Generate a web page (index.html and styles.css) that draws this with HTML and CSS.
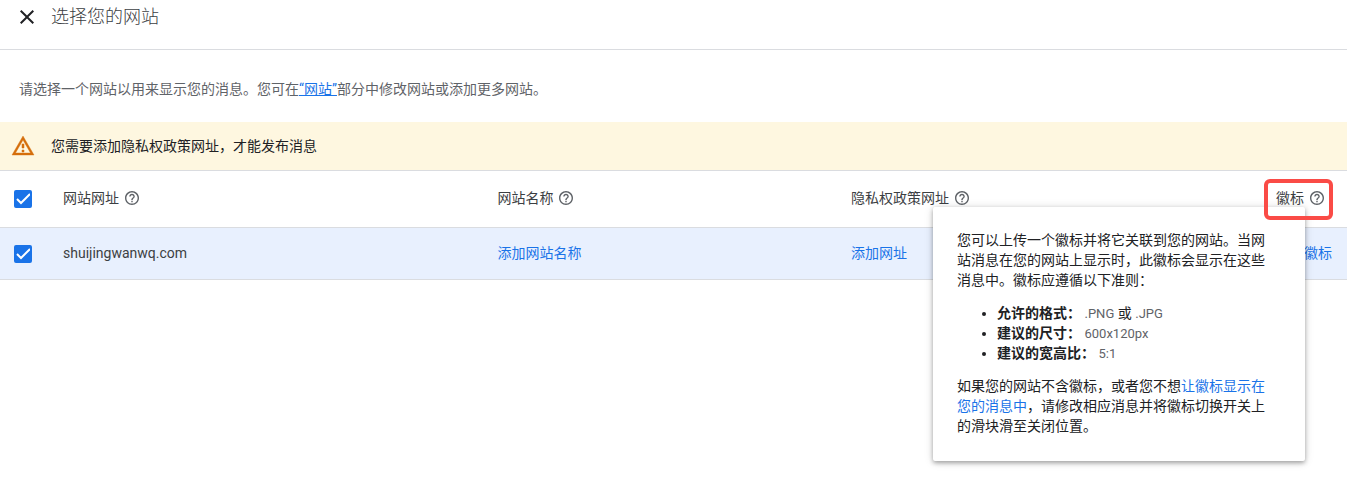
FILE: index.html
```html
<!DOCTYPE html>
<html lang="zh-CN">
<head>
    <meta charset="UTF-8">
    <meta name="viewport" content="width=device-width, initial-scale=1.0">
    <title>选择您的网站</title>
    <link rel="stylesheet" href="styles.css">
</head>
<body>
    <svg class="sprite" aria-hidden="true">
        <symbol id="icon-help" viewBox="2 2 20 20">
            <path d="M11 18h2v-2h-2v2zm1-16C6.48 2 2 6.48 2 12s4.48 10 10 10 10-4.48 10-10S17.52 2 12 2zm0 18c-4.41 0-8-3.59-8-8s3.59-8 8-8 8 3.59 8 8-3.59 8-8 8zm0-14c-2.21 0-4 1.79-4 4h2c0-1.1.9-2 2-2s2 .9 2 2c0 2-3 1.75-3 5h2c0-2.25 3-2.5 3-5 0-2.21-1.79-4-4-4z"/>
        </symbol>
    </svg>

    <header class="header">
        <button type="button" class="close" aria-label="关闭">
            <svg viewBox="0 0 24 24"><path d="M19 6.41L17.59 5 12 10.59 6.41 5 5 6.41 10.59 12 5 17.59 6.41 19 12 13.41 17.59 19 19 17.59 13.41 12z"/></svg>
        </button>
        <h1>选择您的网站</h1>
    </header>

    <main>
        <p class="intro">请选择一个网站以用来显示您的消息。您可在<a href="#">“网站”</a>部分中修改网站或添加更多网站。</p>

        <div class="warning" role="alert">
            <svg viewBox="0 0 24 24"><path d="M12 5.99L19.53 19H4.47L12 5.99M12 2L1 21h22L12 2z" stroke="currentColor" stroke-width="0.4"/><path d="M13 16h-2v2h2zM13 10h-2v4h2z" stroke="currentColor" stroke-width="0.5"/></svg>
            <span>您需要添加隐私权政策网址，才能发布消息</span>
        </div>

        <table class="sites">
            <thead>
                <tr>
                    <th class="col-check"><input type="checkbox" aria-label="全选" checked></th>
                    <th class="col-url"><span class="label">网站网址 <svg class="help"><use href="#icon-help"/></svg></span></th>
                    <th class="col-name"><span class="label">网站名称 <svg class="help"><use href="#icon-help"/></svg></span></th>
                    <th class="col-policy"><span class="label">隐私权政策网址 <svg class="help"><use href="#icon-help"/></svg></span></th>
                    <th class="col-logo">
                        <div class="label logo-label">
                            徽标 <svg class="help"><use href="#icon-help"/></svg>
                            <div class="tooltip" role="tooltip">
                                <p>您可以上传一个徽标并将它关联到您的网站。当网站消息在您的网站上显示时，此徽标会显示在这些消息中。徽标应遵循以下准则：</p>
                                <ul>
                                    <li><b>允许的格式：</b> <span>.PNG</span> 或 <span>.JPG</span></li>
                                    <li><b>建议的尺寸：</b> <span>600x120px</span></li>
                                    <li><b>建议的宽高比：</b> <span>5:1</span></li>
                                </ul>
                                <p>如果您的网站不含徽标，或者您不想<a href="#">让徽标显示在您的消息中</a>，请修改相应消息并将徽标切换开关上的滑块滑至关闭位置。</p>
                            </div>
                            <div class="highlight"></div>
                        </div>
                    </th>
                </tr>
            </thead>
            <tbody>
                <tr>
                    <td class="col-check"><input type="checkbox" aria-label="shuijingwanwq.com" checked></td>
                    <td>shuijingwanwq.com</td>
                    <td><a href="#">添加网站名称</a></td>
                    <td><a href="#">添加网址</a></td>
                    <td><a href="#">添加徽标</a></td>
                </tr>
            </tbody>
        </table>
    </main>
</body>
</html>
```

FILE: styles.css
```css
* {
    box-sizing: border-box;
}
body {
    min-height: 100vh;
    margin: 0;
    background-color: #fff;
    color: #3c4043;
    font-family: Roboto, 'Noto Sans CJK SC', sans-serif;
    font-size: 14px;
    line-height: 20px;
}
a {
    color: #1a73e8;
    text-decoration: none;
}
svg {
    display: block;
    flex: none;
    fill: currentColor;
}
.sprite {
    display: none;
}

/* 顶部标题栏 */
.header {
    display: flex;
    align-items: center;
    gap: 12px;
    padding: 5px 15px 20px;
    border-bottom: 1px solid #dadce0;
}
.header h1 {
    margin: 0;
    font-size: 18px;
    font-weight: 300;
    line-height: 24px;
}
.close {
    padding: 0;
    border: none;
    background: none;
    color: #202124;
    cursor: pointer;
}
.close svg {
    width: 24px;
    height: 24px;
}

.intro {
    margin: 0;
    padding: 29px 19px 23px;
    color: #5f6368;
}
.intro a {
    text-decoration: underline;
}

.warning {
    display: flex;
    align-items: center;
    gap: 16px;
    padding: 12px 11px;
    background-color: #fef7e0;
    color: #202124;
}
.warning svg {
    width: 24px;
    height: 24px;
    color: #d56e0c;
}

/* 网站列表 */
.sites {
    width: 100%;
    border-collapse: collapse;
    table-layout: fixed;
}
.sites th,
.sites td {
    padding: 0 0 2px;
    border-top: 1px solid #dadce0;
    border-bottom: 1px solid #dadce0;
    font-weight: 400;
    text-align: left;
}
.sites th {
    height: 57px;
}
.sites td {
    height: 52px;
    background-color: #e8f0fe;
}
.sites .col-check {
    width: 63px;
    padding: 0 0 0 14px;
}
.col-url {
    width: 32.25%;
}
.col-name {
    width: 26.25%;
}
.col-logo {
    width: 71px;
}
.label {
    display: inline-flex;
    align-items: center;
    gap: 6px;
    white-space: nowrap;
}
.help {
    width: 14px;
    height: 14px;
    color: #5f6368;
}
input[type="checkbox"] {
    display: block;
    appearance: none;
    width: 18px;
    height: 18px;
    margin: 0;
    border: 2px solid #5f6368;
    border-radius: 2px;
}
input[type="checkbox"]:checked {
    border-color: #1a73e8;
    background: #1a73e8 url("data:image/svg+xml,%3Csvg xmlns='http://www.w3.org/2000/svg' viewBox='0 0 18 18'%3E%3Cpath d='M3 9l4 4 9-9' fill='none' stroke='white' stroke-width='2'/%3E%3C/svg%3E") center / 18px no-repeat border-box;
}

/* 徽标说明浮层 */
.logo-label {
    position: relative;
}
.tooltip {
    position: absolute;
    top: 19px;
    right: 19px;
    z-index: 1;
    width: 372px;
    padding: 23px 36px 25px 24px;
    border-radius: 2px;
    background-color: #fff;
    box-shadow: 0 2px 4px rgba(0, 0, 0, 0.3), 0 1px 10px rgba(0, 0, 0, 0.15);
    color: #202124;
    white-space: normal;
}
.tooltip p {
    margin: 0;
}
.tooltip ul {
    margin: 13px 0;
    padding-left: 40px;
}
.tooltip li span {
    color: #5f6368;
    font-size: 13px;
    line-height: 16px;
}
.highlight {
    position: absolute;
    inset: -9px -9px -12px -12px;
    z-index: 2;
    border: 4px solid #fa4b46;
    border-radius: 6px;
    pointer-events: none;
}
```
